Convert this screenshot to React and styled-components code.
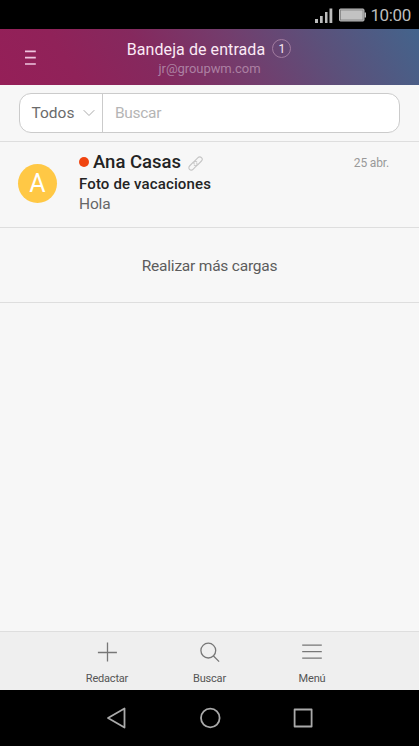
import React from "react";
import styled, { createGlobalStyle } from "styled-components";

const GlobalStyle = createGlobalStyle`
  *, *::before, *::after { box-sizing: border-box; }
  body { margin: 0; background: #f7f7f7; }
  svg { display: block; flex: none; }
  button, input { font: inherit; border: 0; background: none; margin: 0; padding: 0; }
`;

const Screen = styled.div`
  display: flex;
  flex-direction: column;
  height: 746px;
  background: #f7f7f7;
  font-family: Roboto, sans-serif;
  color: #5c5c5c;
`;

const StatusBar = styled.div`
  display: flex;
  align-items: center;
  justify-content: flex-end;
  height: 29px;
  padding-right: 8px;
  background: #000;
`;

const Clock = styled.span`
  margin-left: 4px;
  font-size: 17px;
  line-height: 20px;
  letter-spacing: -0.35px;
  color: #bdbdbd;
`;

const Header = styled.header`
  display: grid;
  grid-template-columns: 60px 1fr 60px;
  height: 56px;
  background: linear-gradient(58deg, #951f58 0%, #902259 18%, #85295e 36%, #733d6d 57%, #5c507a 76%, #43648c 100%);
`;

const MenuButton = styled.button`
  display: flex;
  padding: 21px 0 0 25px;
`;

const Titles = styled.div`
  display: flex;
  flex-direction: column;
  align-items: center;
  padding-top: 10px;
`;

const TitleRow = styled.div`
  display: flex;
  align-items: center;
  height: 21px;
  padding-right: 1px;
`;

const Title = styled.h1`
  margin: 0;
  font-size: 16px;
  line-height: 21px;
  font-weight: 400;
  letter-spacing: 0.08px;
  color: #fbeaf5;
`;

const Count = styled.span`
  width: 19px;
  height: 19px;
  margin: -2px 0 0 7px;
  border: 1px solid #a17b9f;
  border-radius: 50%;
  font-size: 12px;
  line-height: 18px;
  text-align: center;
  color: #fbeaf5;
`;

const Account = styled.span`
  font-size: 13px;
  line-height: 18px;
  letter-spacing: -0.06px;
  color: #ac80a2;
`;

const SearchArea = styled.div`
  height: 57px;
  padding: 8px 19px 0;
  border-bottom: 1px solid #dedede;
`;

const SearchBox = styled.div`
  display: flex;
  height: 40px;
  border: 1px solid #cbcbcb;
  border-radius: 12px;
  background: #fff;
  overflow: hidden;
`;

const Filter = styled.button`
  display: flex;
  align-items: center;
  gap: 9px;
  width: 83px;
  padding-left: 11.5px;
  border-right: 1px solid #cbcbcb;
  font-size: 15.5px;
  color: #6b6b6b;
`;

const SearchInput = styled.input`
  flex: 1;
  min-width: 0;
  padding-left: 12px;
  font-size: 15.5px;
  letter-spacing: -0.3px;
  outline: 0;
  color: #555;
  &::placeholder { color: #b5b5b5; opacity: 1; }
`;

const MessageRow = styled.article`
  display: flex;
  height: 86px;
  padding: 0 30px 0 18px;
  border-bottom: 1px solid #dedede;
`;

const Avatar = styled.div`
  width: 39px;
  height: 39px;
  margin-top: 22px;
  border-radius: 50%;
  background: #ffc845;
  font-size: 25px;
  line-height: 39px;
  text-align: center;
  color: #fff;
`;

const MessageText = styled.div`
  flex: 1;
  padding: 8px 0 0 22px;
`;

const Sender = styled.div`
  display: flex;
  align-items: center;
  height: 24px;
  font-size: 18.5px;
  font-weight: 500;
  color: #242424;
`;

const LinkIcon = styled.svg`
  margin: 2px 0 0 7px;
  fill: none;
  stroke: #c4c4c4;
  stroke-width: 1.7;
  stroke-linecap: round;
`;

const UnreadDot = styled.span`
  width: 10px;
  height: 10px;
  margin-right: 4px;
  border-radius: 50%;
  background: #f0440f;
`;

const Subject = styled.div`
  font-size: 15px;
  line-height: 20px;
  letter-spacing: 0.14px;
  font-weight: 500;
  color: #242424;
`;

const Preview = styled.div`
  font-size: 15.5px;
  line-height: 20px;
  letter-spacing: -0.15px;
  color: #666;
`;

const DateLabel = styled.time`
  padding-top: 13px;
  font-size: 12px;
  line-height: 16px;
  letter-spacing: -0.15px;
  color: #999;
`;

const LoadMore = styled.button`
  height: 75px;
  padding-top: 1px;
  border-bottom: 1px solid #dedede;
  font-size: 15.5px;
  letter-spacing: -0.21px;
  color: #5c5c5c;
`;

const Spacer = styled.div`
  flex: 1;
`;

const Toolbar = styled.footer`
  display: grid;
  grid-template-columns: repeat(3, 102.5px);
  justify-content: center;
  height: 59px;
  border-top: 1px solid #dedede;
  background: #efefef;
`;

const ToolButton = styled.button`
  display: flex;
  flex-direction: column;
  align-items: center;
  gap: 8px;
  padding-top: 9px;
  font-size: 11px;
  line-height: 16px;
  letter-spacing: -0.2px;
  color: #555;
`;

const SystemNav = styled.nav`
  display: grid;
  grid-template-columns: repeat(3, 93px);
  place-content: center;
  place-items: center;
  height: 56px;
  background: #000;
`;

const tools = [
  { label: "Redactar", d: "M12.5 2.5v19M2.9 12.5h19" },
  { label: "Buscar", d: "M10.3 3.2a7.4 7.4 0 1 0 0 14.8a7.4 7.4 0 0 0 0-14.8M15.5 16l5.6 5.6" },
  { label: "Menú", d: "M2.2 5.2h19.6M2.2 11.7h19.6M2.2 18.2h19.6" },
];

export default function App() {
  return (
    <Screen>
      <GlobalStyle />
      <StatusBar>
        <svg width="51" height="18" viewBox="0 0.5 51 18">
          <path d="M0 13.5h3v4H0zM5 10.5h2.7v7H5zM10 6.5h2.5v11H10zM14.5 3h2.8v14.5h-2.8z" fill="#bcbcbc" />
          <rect x="24.5" y="3.5" width="24.5" height="12" rx="1" fill="#c2c2c2" stroke="#bcbcbc" />
          <rect x="25.5" y="4.5" width="22.5" height="10" fill="none" stroke="#777" strokeWidth=".7" />
          <path d="M49.5 7H51v5h-1.5z" fill="#bcbcbc" />
        </svg>
        <Clock>10:00</Clock>
      </StatusBar>
      <Header>
        <MenuButton aria-label="Abrir menú">
          <svg width="11" height="16" viewBox="0 0 11 16">
            <path d="M0 1.3h10.8M0 7.6h10.8M0 14h10.8" stroke="#efc5df" strokeWidth="1.7" />
          </svg>
        </MenuButton>
        <Titles>
          <TitleRow>
            <Title>Bandeja de entrada</Title>
            <Count>1</Count>
          </TitleRow>
          <Account>jr@groupwm.com</Account>
        </Titles>
      </Header>
      <SearchArea>
        <SearchBox>
          <Filter>
            Todos
            <svg width="12" height="8" viewBox="0 0 12 8">
              <path d="M.7 1.2L6 6.5l5.3-5.3" fill="none" stroke="#aaa" strokeWidth="1" />
            </svg>
          </Filter>
          <SearchInput placeholder="Buscar" />
        </SearchBox>
      </SearchArea>
      <MessageRow>
        <Avatar>A</Avatar>
        <MessageText>
          <Sender>
            <UnreadDot />
            Ana Casas
            <LinkIcon width="15" height="15" viewBox="0 0 24 24">
              <path d="M10 14.5a4 4 0 0 0 5.5-.5l6-6a3.8 3.8 0 0 0-5.5-5.5l-5.5 5.5a4 4 0 0 0-.7 4.5" />
              <path d="M14 9.5a4 4 0 0 0-5.5.5l-6 6a3.8 3.8 0 0 0 5.5 5.5l5.500-5.500a4 4 0 0 0 .7-4.500" />
            </LinkIcon>
          </Sender>
          <Subject>Foto de vacaciones</Subject>
          <Preview>Hola</Preview>
        </MessageText>
        <DateLabel>25 abr.</DateLabel>
      </MessageRow>
      <LoadMore>Realizar más cargas</LoadMore>
      <Spacer />
      <Toolbar>
        {tools.map(({ label, d }) => (
          <ToolButton key={label}>
            <svg width="24" height="22" viewBox="0 1 24 22">
              <path d={d} fill="none" stroke="#777" strokeWidth="1.3" />
            </svg>
            {label}
          </ToolButton>
        ))}
      </Toolbar>
      <SystemNav>
        <svg width="24" height="24" viewBox="0 0 24 24" fill="none" stroke="#aaa" strokeWidth="1.8" strokeLinejoin="round">
          <path d="M19.5 2.5v19L3 12z" />
        </svg>
        <svg width="24" height="24" viewBox="0 0 24 24" fill="none" stroke="#aaa" strokeWidth="1.8">
          <circle cx="12.3" cy="12" r="9.3" />
        </svg>
        <svg width="24" height="24" viewBox="0 0 24 24" fill="none" stroke="#aaa" strokeWidth="1.8" strokeLinejoin="round">
          <path d="M3.6 3.5h17v17h-17z" />
        </svg>
      </SystemNav>
    </Screen>
  );
}
